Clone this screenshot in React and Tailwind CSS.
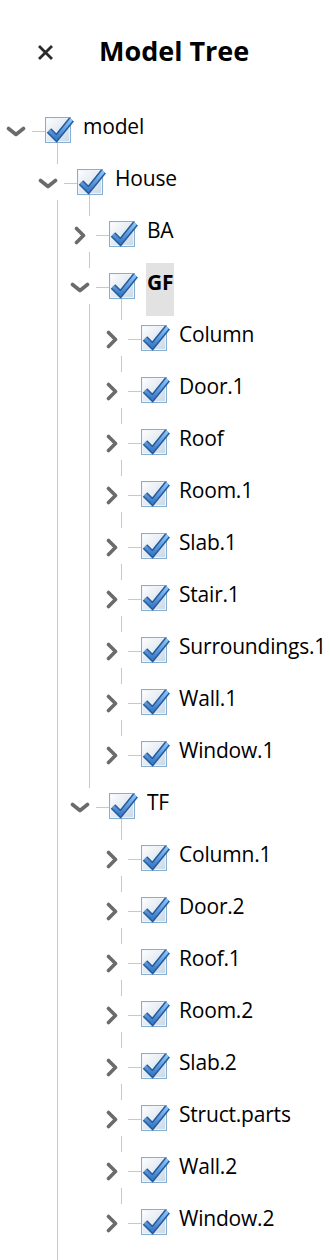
import React from 'react';

const LINE = 'bg-[#c9c9c9]';

const rows = [
  { label: 'model', d: 0, open: true, guides: [], stem: 'none' },
  { label: 'House', d: 1, open: true, guides: [false], stem: 'full' },
  { label: 'BA', d: 2, guides: [false, true], stem: 'full' },
  { label: 'GF', d: 2, open: true, selected: true, guides: [false, true], stem: 'full' },
  ...['Column', 'Door.1', 'Roof', 'Room.1', 'Slab.1', 'Stair.1', 'Surroundings.1', 'Wall.1', 'Window.1'].map((label, i, a) => ({
    label,
    d: 3,
    guides: [false, true, true],
    stem: i === a.length - 1 ? 'top' : 'full',
  })),
  { label: 'TF', d: 2, open: true, guides: [false, true], stem: 'top' },
  ...['Column.1', 'Door.2', 'Roof.1', 'Room.2', 'Slab.2', 'Struct.parts', 'Wall.2', 'Window.2'].map((label, i, a) => ({
    label,
    d: 3,
    guides: [false, true, false],
    stem: i === a.length - 1 ? 'top' : 'full',
  })),
];

function Chevron({ open }) {
  return open ? (
    <svg width="20" height="11" viewBox="0 0 20 11" className="mt-[3px]">
      <polyline points="2.5,2.5 10,8.5 17.5,2.5" fill="none" stroke="#6b6b6b" strokeWidth="3.6" strokeLinecap="round" strokeLinejoin="round" />
    </svg>
  ) : (
    <svg width="12" height="19" viewBox="0 0 12 19" className="mt-[3px]">
      <polyline points="2.5,2.5 9.5,9.5 2.5,16.5" fill="none" stroke="#6b6b6b" strokeWidth="3.6" strokeLinecap="round" strokeLinejoin="round" />
    </svg>
  );
}

function CheckBox() {
  return (
    <svg width="26" height="26" viewBox="0 0 26 26" className="overflow-visible">
      <defs>
        <linearGradient id="cbBg" x1="0" y1="0" x2="1" y2="1">
          <stop offset="0" stopColor="#ffffff" />
          <stop offset="1" stopColor="#c9d7e7" />
        </linearGradient>
        <linearGradient id="cbTick" x1="0" y1="0" x2="0" y2="1">
          <stop offset="0" stopColor="#8cc4f4" />
          <stop offset="1" stopColor="#3b7cc9" />
        </linearGradient>
      </defs>
      <rect x="0.5" y="0.5" width="25" height="25" fill="url(#cbBg)" stroke="#86afd4" />
      <rect x="1.5" y="1.5" width="23" height="23" fill="none" stroke="#eef4fa" />
      <path d="M4 13.5 L11.5 21 L26.5 2.5" fill="none" stroke="#255a9c" strokeWidth="6.4" strokeLinejoin="miter" />
      <path d="M4 13.5 L11.5 21 L26.5 2.5" fill="none" stroke="url(#cbTick)" strokeWidth="3.4" strokeLinejoin="miter" />
    </svg>
  );
}

function Guide({ on }) {
  return <div className="w-8 shrink-0 flex">{on && <div className={`ml-[25px] w-px ${LINE}`} />}</div>;
}

function Row({ row }) {
  return (
    <div className="flex h-[52px]">
      {row.guides.map((g, i) => (
        <Guide key={i} on={g} />
      ))}
      <div className="w-8 shrink-0 flex flex-col">
        <div className="h-2 flex">{row.stem !== 'none' && <div className={`ml-[25px] w-px ${LINE}`} />}</div>
        <div className="h-9 bg-white flex items-center justify-center">
          <Chevron open={row.open} />
        </div>
        <div className="h-2 flex">{row.stem === 'full' && <div className={`ml-[25px] w-px ${LINE}`} />}</div>
      </div>
      <div className="w-[13px] shrink-0">
        <div className={`mt-[27px] h-px ${LINE}`} />
      </div>
      <div className="w-[26px] shrink-0 flex flex-col">
        <div className="mt-[13px] h-[26px]">
          <CheckBox />
        </div>
        {row.open && <div className={`ml-3 w-px flex-1 ${LINE}`} />}
      </div>
      <div
        className={`ml-[11px] self-start mt-[3px] h-[53px] px-px pt-[5px] leading-[28px] text-[21px] text-black whitespace-nowrap tracking-[-0.2px] ${
          row.selected ? 'bg-[#e2e2e2] font-bold' : ''
        }`}
      >
        {row.label}
      </div>
    </div>
  );
}

export default function App() {
  return (
    <div className="w-[330px] min-h-screen bg-white overflow-hidden font-['Open_Sans',sans-serif]">
      <div className="h-[104px] flex items-center">
        <svg width="15" height="15" viewBox="0 0 15 15" className="ml-[38px] shrink-0">
          <path d="M2 2 L13 13 M13 2 L2 13" stroke="#2b2b2b" strokeWidth="2.8" strokeLinecap="square" />
        </svg>
        <h1 className="ml-[46px] text-[27px] font-bold text-black leading-none -mt-[3px]">Model Tree</h1>
      </div>
      {rows.map((r) => (
        <Row key={r.label} row={r} />
      ))}
      <div className="flex h-10">
        <Guide on={false} />
        <Guide on />
      </div>
    </div>
  );
}
